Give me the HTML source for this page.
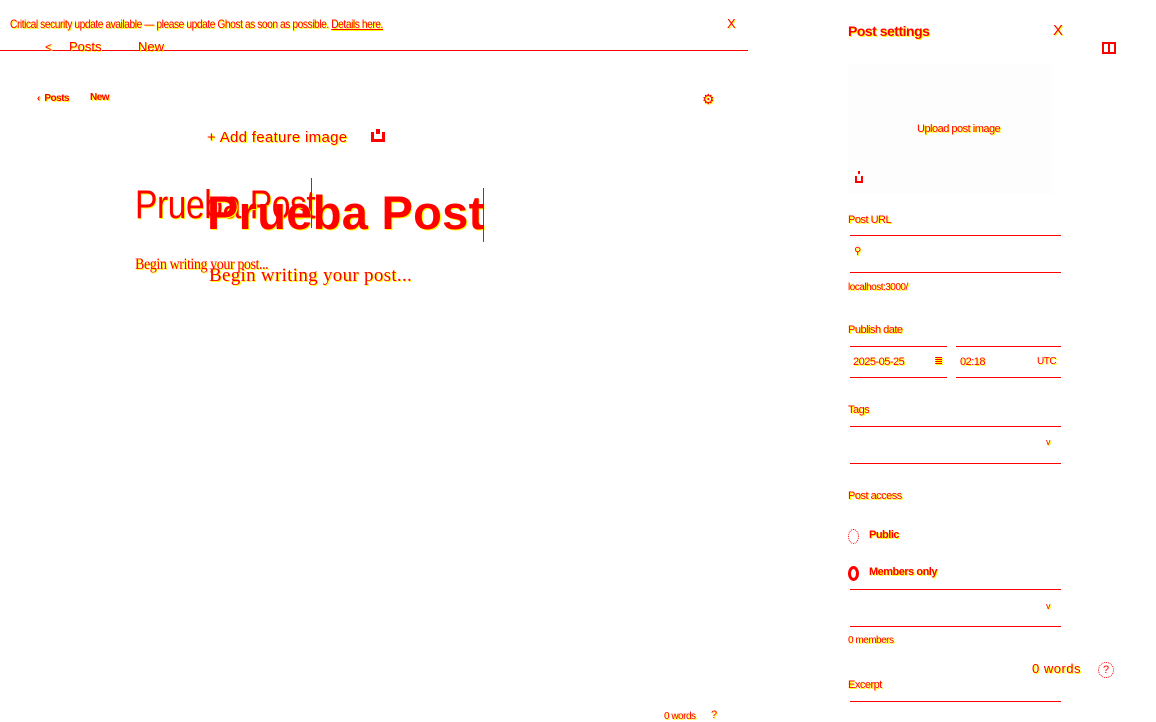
<!DOCTYPE html>
<html><head><meta charset="utf-8"><style>
*{margin:0;padding:0;box-sizing:border-box}
body{width:1156px;height:717px;background:#fff;position:relative;overflow:hidden;font-family:"Liberation Sans",sans-serif;color:#f00}
.a{position:absolute;white-space:nowrap;text-shadow:1px 1px 0 #ff0}
.n{font-family:"Liberation Sans Narrow","Liberation Sans",sans-serif;letter-spacing:-0.5px}
.l{position:absolute;height:1px;background:#f00}
.b{font-weight:bold}
</style></head><body>
<div class="a n" style="left:10px;top:17px;font-size:12px;transform:scaleX(.85);transform-origin:left">Critical security update available — please update Ghost as soon as possible. <u>Details here.</u></div>
<div class="a" style="left:727px;top:16px;font-size:13px">X</div>
<div class="l" style="left:0;top:50px;width:748px"></div>
<div class="a" style="left:45px;top:40px;font-size:12px">&lt;</div>
<div class="a" style="left:69px;top:39px;font-size:13px">Posts</div>
<div class="a" style="left:138px;top:39px;font-size:13px">New</div>
<div class="a n b" style="left:37px;top:93px;font-size:10px">‹ &nbsp;Posts</div>
<div class="a n b" style="left:90px;top:92px;font-size:10px">New</div>
<div class="a" style="left:702px;top:91px;font-size:14px">⚙</div>
<div class="a" style="left:207px;top:129px;font-size:15px;letter-spacing:.3px">+ Add feature image</div>
<div style="position:absolute;left:371px;top:132px;width:14px;height:10px;border:3px solid #f00;border-top:none"></div>
<div style="position:absolute;left:376px;top:129px;width:4px;height:5px;background:#f00"></div>
<div class="a n" style="left:135px;top:183px;font-size:40px;transform:scaleX(.84);transform-origin:left">Prueba Post</div>
<div class="a b" style="left:207px;top:185px;font-size:47px;letter-spacing:.3px">Prueba Post</div>
<div style="position:absolute;left:483px;top:188px;width:1px;height:54px;background:#f00"></div>
<div style="position:absolute;left:311px;top:178px;width:1px;height:50px;background:#f00"></div>
<div class="a n" style="left:135px;top:256px;font-family:'Liberation Serif',serif;font-size:16px;transform:scaleX(.88);transform-origin:left">Begin writing your post...</div>
<div class="a" style="left:209px;top:265px;font-family:'Liberation Serif',serif;font-size:19px;letter-spacing:.3px">Begin writing your post...</div>
<div class="a n" style="left:664px;top:711px;font-size:10px">0 words</div>
<div class="a" style="left:711px;top:709px;font-size:11px">?</div>

<div class="a n b" style="left:848px;top:23px;font-size:14px">Post settings</div>
<div class="a" style="left:1053px;top:22px;font-size:15px">X</div>
<div style="position:absolute;left:1102px;top:42px;width:14px;height:12px;border:2px solid #f00"></div>
<div style="position:absolute;left:1108px;top:42px;width:2px;height:12px;background:#f00"></div>
<div style="position:absolute;left:848px;top:64px;width:204px;height:130px;background:#fdfdfd"></div>
<div class="a n" style="left:917px;top:123px;font-size:11px">Upload post image</div>
<div style="position:absolute;left:855px;top:176px;width:8px;height:7px;border:2px solid #f00;border-top:none"></div>
<div style="position:absolute;left:858px;top:171px;width:2px;height:3px;background:#f00"></div>
<div class="a n" style="left:848px;top:214px;font-size:11px">Post URL</div>
<div class="l" style="left:850px;top:235px;width:211px"></div>
<div class="l" style="left:850px;top:272px;width:211px"></div>
<div class="a" style="left:854px;top:246px;font-size:10px">⚲</div>
<div class="a n" style="left:848px;top:282px;font-size:10px">localhost:3000/</div>
<div class="a n" style="left:848px;top:324px;font-size:11px">Publish date</div>
<div class="l" style="left:850px;top:346px;width:97px"></div>
<div class="l" style="left:850px;top:377px;width:97px"></div>
<div class="l" style="left:956px;top:346px;width:105px"></div>
<div class="l" style="left:956px;top:377px;width:105px"></div>
<div class="a n" style="left:853px;top:356px;font-size:11px">2025-05-25</div>
<div class="a" style="left:934px;top:354px;font-size:11px">≣</div>
<div class="a n" style="left:960px;top:356px;font-size:11px">02:18</div>
<div class="a n" style="left:1037px;top:356px;font-size:10px">UTC</div>
<div class="a n" style="left:848px;top:404px;font-size:11px">Tags</div>
<div class="l" style="left:850px;top:426px;width:211px"></div>
<div class="l" style="left:850px;top:463px;width:211px"></div>
<div class="a" style="left:1046px;top:437px;font-size:9px">v</div>
<div class="a n" style="left:848px;top:490px;font-size:11px">Post access</div>
<div style="position:absolute;left:848px;top:529px;width:11px;height:15px;border:1px dotted #f00;border-radius:50%"></div>
<div class="a n b" style="left:869px;top:529px;font-size:11px">Public</div>
<div style="position:absolute;left:848px;top:566px;width:11px;height:15px;border:3px solid #f00;border-radius:50%"></div>
<div class="a n b" style="left:869px;top:566px;font-size:11px">Members only</div>
<div class="l" style="left:850px;top:589px;width:211px"></div>
<div class="l" style="left:850px;top:626px;width:211px"></div>
<div class="a" style="left:1046px;top:601px;font-size:9px">v</div>
<div class="a n" style="left:848px;top:635px;font-size:10px">0 members</div>
<div class="a" style="left:1032px;top:661px;font-size:13px;letter-spacing:.5px">0 words</div>
<div style="position:absolute;left:1098px;top:662px;width:16px;height:16px;border:1px dotted #f00;border-radius:50%;font-size:11px;text-align:center;line-height:14px">?</div>
<div class="a n" style="left:848px;top:679px;font-size:11px">Excerpt</div>
<div class="l" style="left:850px;top:701px;width:211px"></div>
</body></html>
